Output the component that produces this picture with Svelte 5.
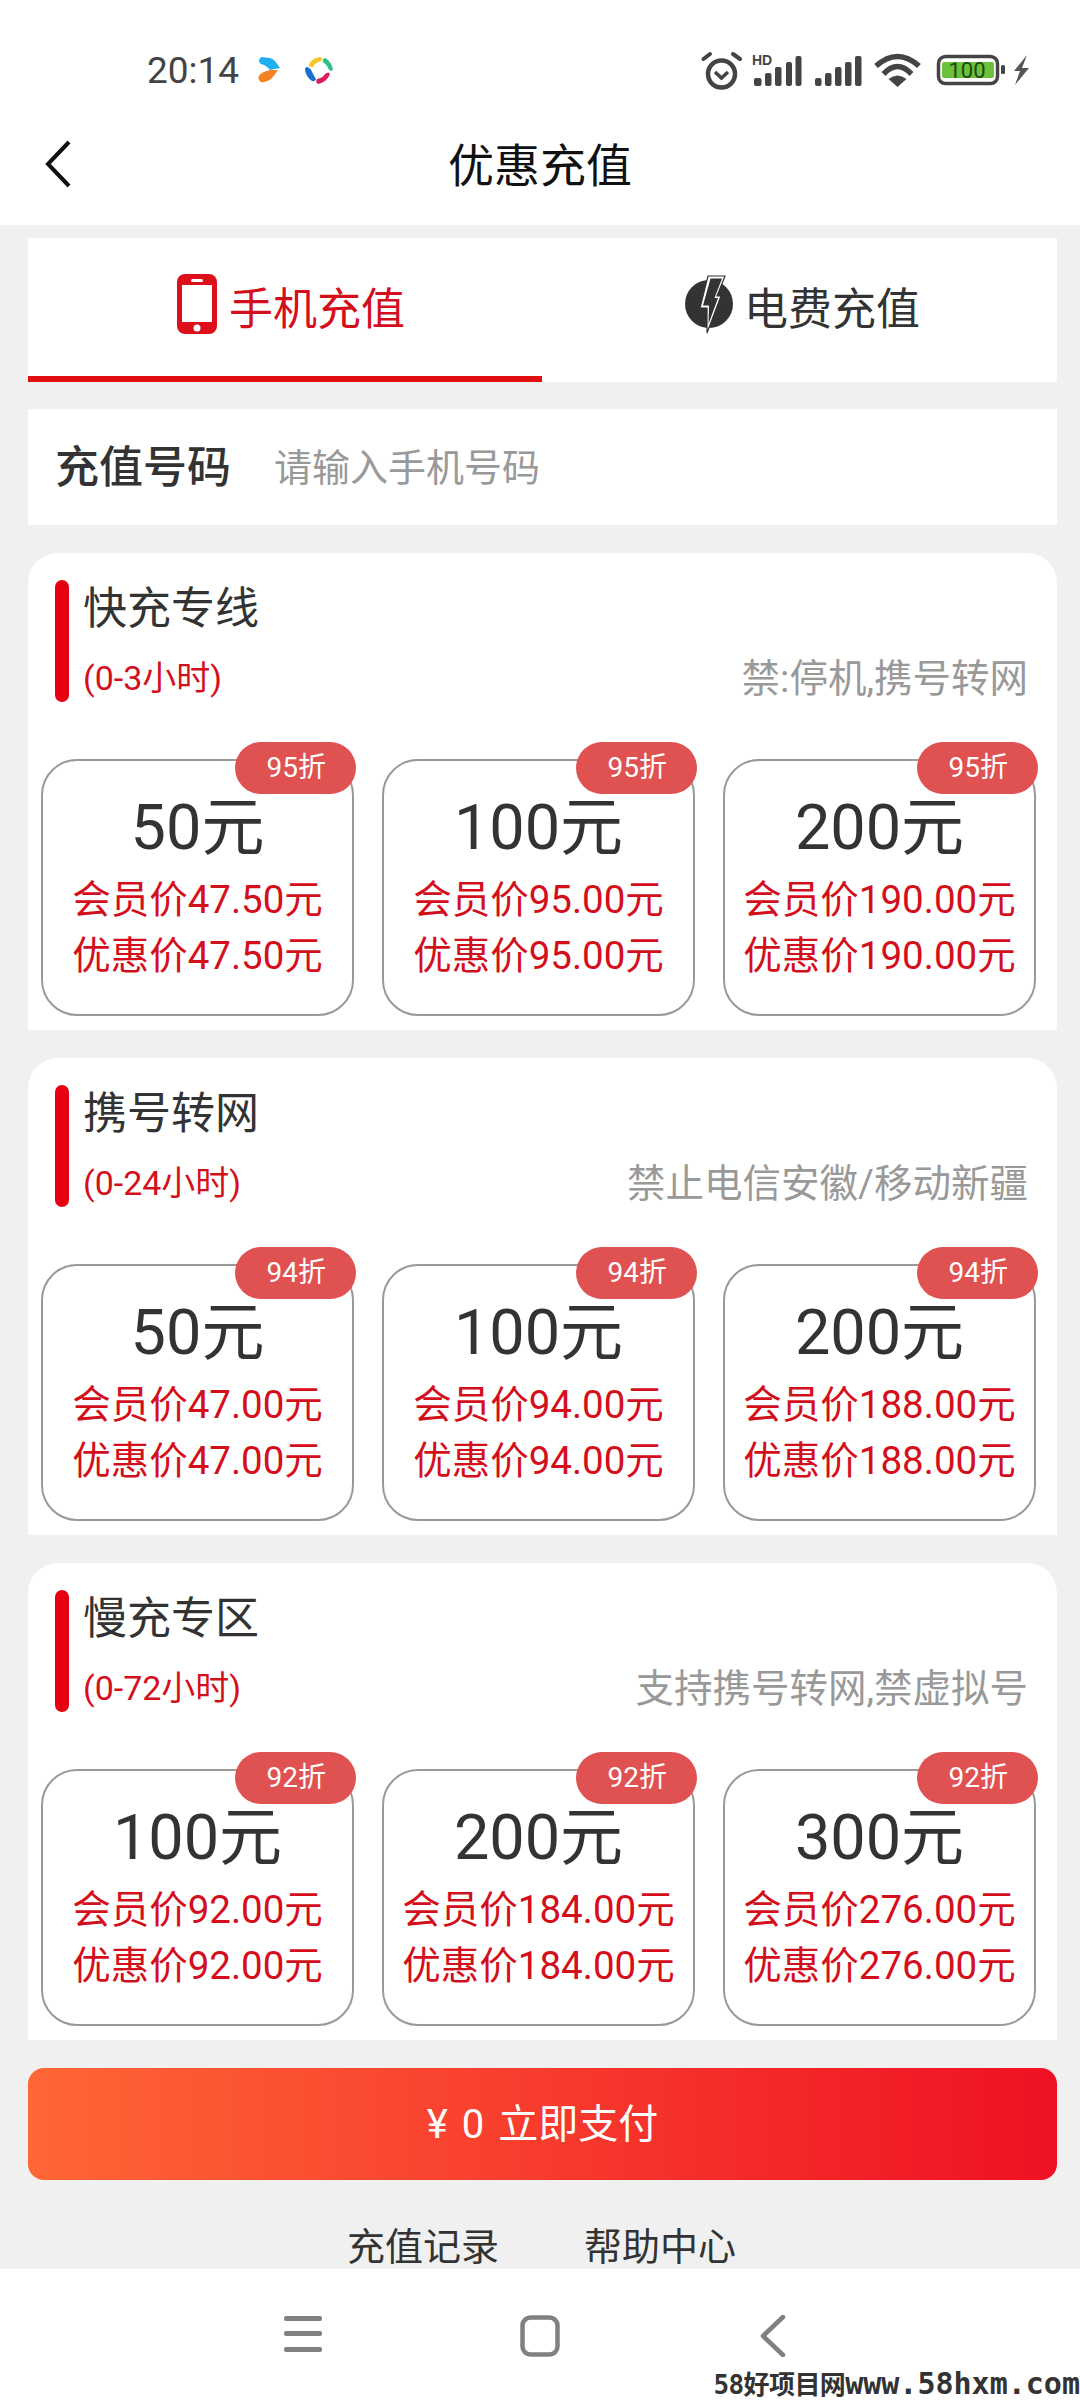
<script lang="ts">
	const groups = [
		{
			title: '快充专线',
			time: '(0-3小时)',
			note: '禁:停机,携号转网',
			discount: '95折',
			items: [
				{ face: '50元', price: '47.50元' },
				{ face: '100元', price: '95.00元' },
				{ face: '200元', price: '190.00元' },
			],
		},
		{
			title: '携号转网',
			time: '(0-24小时)',
			note: '禁止电信安徽/移动新疆',
			discount: '94折',
			items: [
				{ face: '50元', price: '47.00元' },
				{ face: '100元', price: '94.00元' },
				{ face: '200元', price: '188.00元' },
			],
		},
		{
			title: '慢充专区',
			time: '(0-72小时)',
			note: '支持携号转网,禁虚拟号',
			discount: '92折',
			items: [
				{ face: '100元', price: '92.00元' },
				{ face: '200元', price: '184.00元' },
				{ face: '300元', price: '276.00元' },
			],
		},
	];
</script>

<div class="page">
	<!-- Status bar -->
	<div class="status">
		<div class="status__left">
			<span class="status__time">20:14</span>
			<svg class="status__app" width="24" height="28" viewBox="0 0 24 28">
				<path d="M4 1 L13 2 Q16 3 18 5 L23 12 L13 14 Q9 9 4 8 Q0 5 4 1Z" fill="#1fb0f0"/>
				<path d="M13 14 L21 14 Q18 19 14 23 Q9 27 4 26 Q0 23 2 20 Q4 16 13 14Z" fill="#f5821f"/>
			</svg>
			<svg class="status__app2" width="30" height="30" viewBox="0 0 30 30">
				<path d="M5 9 Q8 3 16 2 Q20 3 17 6 Q12 7 9 12 Q5 13 5 9Z" fill="#f6c92b"/>
				<path d="M21 3 Q27 6 29 14 Q28 17 25 15 Q24 11 19 7 Q18 4 21 3Z" fill="#2cc08a"/>
				<path d="M26 19 Q23 27 14 29 Q11 27 13 24 Q19 23 21 19 Q25 16 26 19Z" fill="#dc1c63"/>
				<path d="M3 12 Q7 13 8 17 Q10 21 12 24 Q11 27 8 26 Q2 22 1 15 Q1 12 3 12Z" fill="#1670d0"/>
			</svg>
		</div>
		<svg class="status__right" width="340" height="44" viewBox="0 0 340 44">
			<!-- alarm -->
			<circle cx="21.5" cy="24" r="13.5" fill="none" stroke="#444" stroke-width="4.5"/>
			<path d="M15 22l6.5 6 6.5-6" fill="none" stroke="#444" stroke-width="3.5"/>
			<path d="M3.5 9 L10 4 M33 4 L40 9" stroke="#444" stroke-width="4" stroke-linecap="round"/>
			<!-- hd signal -->
			<text x="52" y="15" class="status__hd">HD</text>
			<g fill="#444">
				<rect x="54" y="28" width="7.5" height="8" rx="2"/>
				<rect x="65" y="23" width="6.5" height="13" rx="2"/>
				<rect x="75" y="17" width="6.5" height="19" rx="2"/>
				<rect x="86" y="12" width="6" height="24" rx="2"/>
				<rect x="95.5" y="6" width="6" height="30" rx="2"/>
				<rect x="115" y="28" width="6.5" height="8" rx="2"/>
				<rect x="125" y="23" width="6.5" height="13" rx="2"/>
				<rect x="135" y="17" width="6.5" height="19" rx="2"/>
				<rect x="145" y="12" width="6.5" height="24" rx="2"/>
				<rect x="155" y="6" width="6.5" height="30" rx="2"/>
			</g>
			<!-- wifi -->
			<g fill="none" stroke="#444" stroke-width="5.5">
				<path d="M176 16 Q197.5 -3 219 16"/>
				<path d="M183.5 24 Q197.5 9 211.5 24"/>
			</g>
			<path d="M197.5 37 L188.5 29 Q197.5 22 206.5 29Z" fill="#444"/>
			<!-- battery -->
			<rect x="238.5" y="6.5" width="59" height="27" rx="7" fill="none" stroke="#444" stroke-width="3.5"/>
			<rect x="242" y="12" width="52" height="16" rx="2" fill="#6cc13a"/>
			<text x="267" y="28" text-anchor="middle" class="status__batt">100</text>
			<rect x="301" y="15" width="4" height="9" rx="1.5" fill="#444"/>
			<path d="M327 5 L314 21 L320 21 L315 35 L329 18 L322 18Z" fill="#555"/>
		</svg>
	</div>

	<!-- Header -->
	<header class="header">
		<svg class="header__back" width="28" height="48" viewBox="0 0 28 48">
			<path d="M25 2 L4 24 L25 46" fill="none" stroke="#111" stroke-width="4"/>
		</svg>
		<h1 class="header__title">优惠充值</h1>
	</header>

	<!-- Tabs -->
	<div class="tabs">
		<div class="tab tab--active">
			<svg width="40" height="60" viewBox="0 0 40 60">
				<rect width="40" height="60" rx="8" fill="#dc0f1a"/>
				<rect x="5" y="11" width="30" height="37" fill="#fff"/>
				<rect x="14" y="5" width="12" height="3" rx="1.5" fill="#fff"/>
				<circle cx="20" cy="54" r="3.5" fill="#fff"/>
			</svg>
			<span class="tab__label">手机充值</span>
		</div>
		<div class="tab tab--second">
			<svg width="50" height="60" viewBox="0 0 50 60">
				<circle cx="24" cy="30" r="24" fill="#333"/>
				<path d="M23 2 L40 2 L32 22 L36 22 L22 59 L22 34 L15 34Z" fill="#fff" stroke="#333" stroke-width="1.2"/>
				<path d="M25.5 4.5 L37 4.5 L29.5 24 L33 24 L23.5 50 L24 31.5 L18 31.5Z" fill="#333"/>
			</svg>
			<span class="tab__label">电费充值</span>
		</div>
	</div>

	<!-- Phone number -->
	<div class="phone">
		<span class="phone__label">充值号码</span>
		<span class="phone__placeholder">请输入手机号码</span>
	</div>

	<!-- Recharge groups -->
	{#each groups as group}
		<section class="group">
			<div class="group__head">
				<div class="group__bar"></div>
				<div class="group__info">
					<div class="group__title">{group.title}</div>
					<div class="group__row">
						<span class="group__time">{group.time}</span>
						<span class="group__note">{group.note}</span>
					</div>
				</div>
			</div>
			<div class="group__grid">
				{#each group.items as item}
					<div class="card">
						<span class="card__badge">{group.discount}</span>
						<div class="card__face">{item.face}</div>
						<div class="card__price">会员价{item.price}</div>
						<div class="card__price">优惠价{item.price}</div>
					</div>
				{/each}
			</div>
		</section>
	{/each}

	<button class="pay">¥ 0 立即支付</button>

	<div class="links">
		<span>充值记录</span>
		<span>帮助中心</span>
	</div>

	<!-- Navigation bar -->
	<nav class="nav">
		<svg width="38" height="38" viewBox="0 0 38 38">
			<g fill="#808080">
				<rect y="1" width="38" height="5" rx="2"/>
				<rect y="16" width="38" height="5" rx="2"/>
				<rect y="32" width="38" height="5" rx="2"/>
			</g>
		</svg>
		<svg width="40" height="42" viewBox="0 0 40 42">
			<rect x="2.5" y="2.5" width="35" height="37" rx="8" fill="none" stroke="#808080" stroke-width="4.5"/>
		</svg>
		<svg width="28" height="42" viewBox="0 0 28 42">
			<path d="M25 2 L5 21 L25 40" fill="none" stroke="#808080" stroke-width="4.5" stroke-linecap="round" stroke-linejoin="round"/>
		</svg>
	</nav>

	<div class="watermark"><span class="watermark__cn">58好项目网</span>www.58hxm.com</div>
</div>

<style>
	:global(body) {
		margin: 0;
		background: #f0f0f0;
	}

	.page {
		position: relative;
		height: 2400px;
		overflow: hidden;
		background: #f0f0f0;
		font-family: Roboto, "Noto Sans CJK SC", sans-serif;
		color: #333;
	}

	/* Status bar */
	.status {
		height: 100px;
		background: #fff;
		display: flex;
		align-items: flex-start;
		justify-content: space-between;
		padding-left: 147px;
		padding-right: 40px;
		box-sizing: border-box;
	}

	.status__left {
		display: flex;
		align-items: center;
		height: 70px;
		margin-top: 35px;
	}

	.status__time {
		font-size: 37px;
		color: #444;
		width: 110px;
	}

	.status__app {
		margin-right: 23px;
	}

	.status__right {
		margin-top: 50px;
	}

	.status__hd {
		font: 700 14px "Liberation Sans", sans-serif;
		fill: #444;
	}

	.status__batt {
		font: 400 22px Roboto, sans-serif;
		fill: #1b4a10;
	}

	/* Header */
	.header {
		height: 125px;
		box-sizing: border-box;
		padding-bottom: 2px;
		background: #fff;
		display: flex;
		align-items: center;
		justify-content: center;
		position: relative;
	}

	.header__back {
		position: absolute;
		left: 44px;
		top: 40px;
	}

	.header__title {
		margin: 0;
		font-size: 46px;
		font-weight: 400;
		color: #111;
	}

	/* Tabs */
	.tabs {
		margin: 13px 23px 0 28px;
		height: 144px;
		background: #fff;
		display: grid;
		grid-template-columns: 514px 1fr;
	}

	.tab {
		display: flex;
		align-items: center;
		justify-content: center;
		gap: 12px;
		font-size: 44px;
		color: #333;
		box-sizing: border-box;
		padding-bottom: 12px;
	}

	.tab__label {
		margin-top: 4px;
	}

	.tab--active {
		color: #d40f1c;
		border-bottom: 6px solid #e01010;
		padding-bottom: 6px;
		padding-left: 12px;
	}

	.tab--second {
		gap: 9px;
		padding-left: 6px;
	}

	/* Phone number */
	.phone {
		margin: 27px 23px 0 28px;
		height: 116px;
		background: #fff;
		display: flex;
		align-items: center;
		padding-left: 27px;
		padding-bottom: 6px;
		box-sizing: border-box;
	}

	.phone__label {
		font-size: 44px;
		font-weight: 500;
		width: 219px;
	}

	.phone__placeholder {
		font-size: 38px;
		color: #999;
	}

	/* Groups */
	.group {
		margin: 28px 23px 0 28px;
		height: 477px;
		box-sizing: border-box;
		background: #fff;
		border-radius: 30px 30px 0 0;
		padding-top: 27px;
	}

	.group__head {
		display: flex;
		gap: 14px;
		padding: 0 29px 0 27px;
	}

	.group__bar {
		width: 14px;
		height: 122px;
		border-radius: 7px;
		background: #e50012;
	}

	.group__info {
		flex: 1;
	}

	.group__title {
		font-size: 44px;
		line-height: 58px;
		color: #333;
	}

	.group__row {
		display: flex;
		justify-content: space-between;
		align-items: center;
		margin-top: 14px;
		line-height: 50px;
	}

	.group__time {
		font-size: 34px;
		color: #d40f1c;
	}

	.group__note {
		font-size: 38.5px;
		color: #999;
		padding-top: 2px;
	}

	.group__grid {
		display: grid;
		grid-template-columns: repeat(3, 313px);
		gap: 28px;
		margin-top: 55px;
		padding-left: 13px;
	}

	.card {
		position: relative;
		height: 257px;
		box-sizing: border-box;
		border: 2px solid #999;
		border-radius: 36px;
		padding-top: 31px;
		text-align: center;
	}

	.card__badge {
		position: absolute;
		top: -19px;
		right: -4px;
		width: 121px;
		height: 52px;
		border-radius: 26px;
		background: #e05252;
		color: #fff;
		font-size: 28px;
		line-height: 52px;
		text-align: right;
		padding-right: 30px;
		box-sizing: border-box;
	}

	.card__face {
		font-size: 63px;
		line-height: 72px;
		margin-bottom: 8px;
		color: #333;
	}

	.card__price {
		font-size: 38.5px;
		line-height: 56px;
		color: #d40f1c;
	}

	/* Pay button */
	.pay {
		display: block;
		width: 1029px;
		height: 112px;
		margin: 28px 0 0 28px;
		border: none;
		border-radius: 16px;
		background: linear-gradient(90deg, #ff6636, #ef1024);
		color: #fff;
		font-family: inherit;
		font-size: 40px;
		word-spacing: 4px;
		padding: 0 0 6px;
	}

	.links {
		display: flex;
		justify-content: center;
		gap: 85px;
		margin-top: 44px;
		padding-left: 3px;
		font-size: 38px;
		line-height: 46px;
		color: #333;
	}

	/* Navigation bar */
	.nav {
		position: absolute;
		left: 0;
		right: 0;
		bottom: 0;
		height: 131px;
		background: #fff;
		display: flex;
		justify-content: center;
		align-items: flex-start;
		gap: 198px;
		padding: 46px 10px 0 0;
		box-sizing: border-box;
	}

	.watermark {
		position: absolute;
		right: 0;
		bottom: -1px;
		font-family: "DejaVu Sans Mono", "Noto Sans CJK SC", monospace;
		font-weight: 700;
		font-size: 30px;
		line-height: 32px;
		color: #333;
		white-space: nowrap;
	}

	.watermark__cn {
		font-size: 26px;
		letter-spacing: -0.6px;
	}
</style>
